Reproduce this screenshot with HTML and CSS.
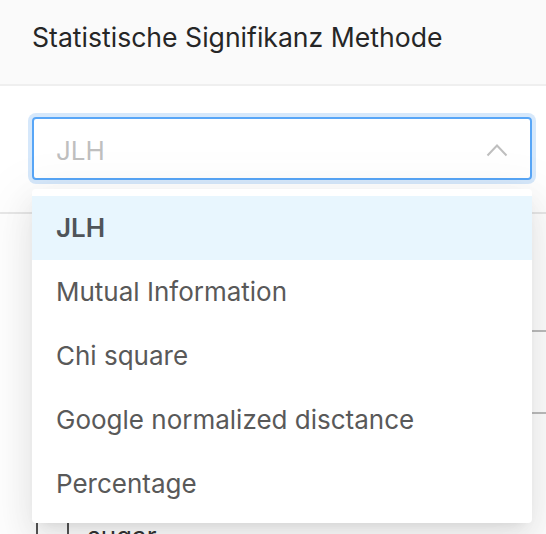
FILE: index.html
```html
<!DOCTYPE html>
<html>
<head>
    <title>Statistische Signifikanz</title>
    <link rel="stylesheet" href="styles.css">
</head>
<body>
    <div class="header">
        <h2 class="title">Statistische Signifikanz Methode</h2>
    </div>

    <div class="content">
        <div class="select">
            <span class="placeholder">JLH</span>
            <svg class="arrow" width="22" height="14" viewBox="0 0 22 14">
                <polyline points="1.5,12.5 11,2.5 20.5,12.5" fill="none" stroke="#bfbfbf" stroke-width="2"/>
            </svg>
        </div>
    </div>

    <div class="below">
        <div class="field"></div>
        <div class="treeRow">
            <span class="guide"></span>
            <span class="guide"></span>
            <span class="word">sugar</span>
        </div>
    </div>

    <!-- open dropdown of the select -->
    <div class="dropdown">
        <div class="option selected">JLH</div>
        <div class="option">Mutual Information</div>
        <div class="option">Chi square</div>
        <div class="option">Google normalized disctance</div>
        <div class="option">Percentage</div>
    </div>
</body>
</html>
```

FILE: styles.css
```css
body {
    margin: 0;
    font-family: Inter, "Liberation Sans", sans-serif;
    background-color: #fff;
    overflow: hidden;
    height: 534px;
}

.header {
    background-color: #fafafa;
    height: 84px;
    border-bottom: 2px solid #efefef;
    padding-left: 32px;
    display: flex;
    align-items: center;
}

.title {
    margin: 0 0 10px 0;
    font-size: 26.6px;
    font-weight: normal;
    color: #262626;
}

.content {
    padding: 31px 14px 32px 32px;
}

.select {
    height: 59px;
    border: 2px solid #58a6f7;
    border-radius: 4px;
    box-shadow: 0 0 0 4px #d6e8fb;
    display: flex;
    align-items: center;
    justify-content: space-between;
    padding: 0 22px;
}

.placeholder {
    font-size: 26px;
    color: #bfbfbf;
    margin-top: 3px;
}

.arrow {
    display: block;
    margin-top: 3px;
}

.below {
    border-top: 2px solid #e8e8e8;
}

.field {
    margin: 116px -20px 0 32px;
    height: 80px;
    border-top: 2px solid #bdbdbd;
    border-bottom: 2px solid #bdbdbd;
}

.treeRow {
    display: flex;
    align-items: flex-start;
    margin-top: 106px;
    padding-left: 36px;
    height: 40px;
}

.guide {
    width: 2px;
    height: 40px;
    background-color: #555;
    margin-right: 29px;
}

.guide + .guide {
    margin-right: 18px;
}

.word {
    font-size: 26px;
    color: #333;
    line-height: 30px;
    margin-top: 2px;
}

.dropdown {
    position: absolute;
    top: 189px;
    left: 32px;
    width: 500px;
    padding: 7px 0;
    background-color: #fff;
    border-radius: 4px;
    box-shadow: 0 6px 12px -8px rgba(0, 0, 0, 0.12),
                0 12px 32px 0 rgba(0, 0, 0, 0.08),
                0 18px 56px 16px rgba(0, 0, 0, 0.05);
}

.option {
    height: 64px;
    line-height: 64px;
    padding: 0 24px;
    font-size: 26px;
    color: #595959;
}

.selected {
    background-color: #e8f6fe;
    font-weight: 600;
    color: #4f5459;
}
```
